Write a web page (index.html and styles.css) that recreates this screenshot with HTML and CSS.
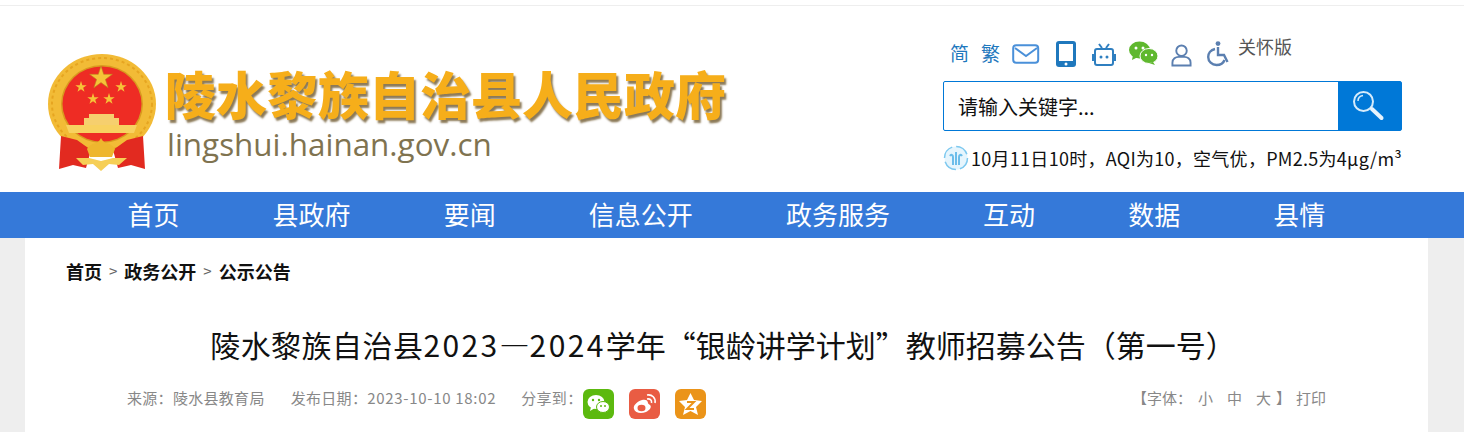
FILE: index.html
```html
<!DOCTYPE html>
<html lang="zh-CN">
<head>
    <meta charset="UTF-8">
    <title>陵水黎族自治县人民政府</title>
    <link rel="stylesheet" href="styles.css">
</head>
<body>
    <div class="top-line"></div>

    <div class="header">
        <div class="logo">
            <svg class="emblem" width="112" height="120" viewBox="0 0 112 120">
                <defs>
                    <polygon id="star" points="0,-6 1.35,-1.85 5.7,-1.85 2.2,.7 3.5,4.85 0,2.3 -3.5,4.85 -2.2,.7 -5.7,-1.85 -1.35,-1.85"/>
                </defs>
                <ellipse cx="55" cy="51" rx="54" ry="50" fill="#f2bb36"/>
                <ellipse cx="55" cy="51" rx="50" ry="46" fill="none" stroke="#e6a521" stroke-width="2" stroke-dasharray="3 3"/>
                <ellipse cx="55" cy="51" rx="41" ry="39" fill="#d99a1f"/>
                <ellipse cx="55" cy="51" rx="39.500" ry="37.500" fill="#ee2c24"/>
                <polygon points="54,13 56.700,21.300 65.400,21.300 58.400,26.400 61.100,34.700 54,29.600 46.900,34.700 49.600,26.400 42.600,21.300 51.300,21.300" fill="#f6c338" stroke="#b8861c" stroke-width=".6"/>
                <use href="#star" transform="translate(34,34)" fill="#f6c338"/>
                <use href="#star" transform="translate(74,34)" fill="#f6c338"/>
                <use href="#star" transform="translate(46,46)" fill="#f6c338"/>
                <use href="#star" transform="translate(62,46)" fill="#f6c338"/>
                <path d="M42 61H67V65H72V72H37V65H42Z" fill="#f6cf6e"/>
                <path d="M19 72H90L87 80H22Z" fill="#f8d160"/>
                <path d="M14 83 30 87 44 97 39 115 26 112 12 116Z" fill="#e22a20"/>
                <path d="M96 83 80 87 66 97 71 115 84 112 98 116Z" fill="#e22a20"/>
                <path d="M40 96C45 88 50 93 54 85 58 93 63 88 68 96L65 104H43Z" fill="#eeb62e"/>
                <path d="M29 105 42 105 54 108 66 105 80 105 72 112 62 111 54 118 46 111 36 112Z" fill="#f6cf56"/>
            </svg>
            <div class="logo-text">
                <div class="logo-title">陵水黎族自治县人民政府</div>
                <div class="logo-url">lingshui.hainan.gov.cn</div>
            </div>
        </div>

        <div class="header-right">
            <div class="tools">
                <a class="tool-text">简</a>
                <a class="tool-text">繁</a>
                <svg class="mail" width="28" height="20" viewBox="0 0 28 20">
                    <rect x="1.200" y="1.200" width="25" height="17.500" rx="3" fill="none" stroke="#4a90d9" stroke-width="2"/>
                    <path d="M3 4 14 12 25 4" fill="none" stroke="#4a90d9" stroke-width="2"/>
                </svg>
                <svg class="phone" width="20" height="26" viewBox="0 0 20 26">
                    <rect width="20" height="26" rx="3" fill="#1f78bd"/>
                    <rect x="3" y="3" width="14" height="17" fill="#fff"/>
                    <circle cx="10" cy="23" r="1.500" fill="#fff"/>
                </svg>
                <svg class="tv" width="24" height="24" viewBox="0 0 24 24">
                    <path d="M7 1 10 5M17 1 14 5" stroke="#2f7fc0" stroke-width="2"/>
                    <rect x="3" y="6" width="18" height="16" rx="2" fill="none" stroke="#2f7fc0" stroke-width="2"/>
                    <rect y="11" width="2" height="7" fill="#2f7fc0"/>
                    <rect x="22" y="11" width="2" height="7" fill="#2f7fc0"/>
                    <circle cx="9" cy="14" r="1.500" fill="#2f7fc0"/>
                    <circle cx="15" cy="14" r="1.500" fill="#2f7fc0"/>
                </svg>
                <svg class="wechat" width="29" height="24" viewBox="0 0 29 24">
                    <ellipse cx="10.500" cy="9" rx="10.500" ry="8.500" fill="#5fb82e"/>
                    <path d="M4 14 3 19 9 16Z" fill="#5fb82e"/>
                    <ellipse cx="20" cy="15" rx="9" ry="7.500" fill="#5fb82e" stroke="#fff"/>
                    <path d="M24 21 26 24 20 22Z" fill="#5fb82e"/>
                    <circle cx="7" cy="7" r="1.500" fill="#fff"/>
                    <circle cx="14" cy="7" r="1.500" fill="#fff"/>
                    <circle cx="17" cy="14" r="1.200" fill="#fff"/>
                    <circle cx="23" cy="14" r="1.200" fill="#fff"/>
                </svg>
                <svg class="user" width="21" height="24" viewBox="0 0 22 24">
                    <circle cx="11" cy="7.500" r="5.500" fill="none" stroke="#5b7fb0" stroke-width="2"/>
                    <path d="M1.500 23V20C1.500 16 5 14 8 14H14C17 14 20.500 16 20.500 20V23Z" fill="none" stroke="#5b7fb0" stroke-width="2"/>
                </svg>
                <svg class="care" width="23" height="26" viewBox="0 0 23 26">
                    <circle cx="11" cy="2.600" r="2.400" fill="#5b7fb0"/>
                    <path d="M11 6V14H17L20.500 21" fill="none" stroke="#5b7fb0" stroke-width="2.400"/>
                    <path d="M8 8C3.500 9 1.200 12.500 1.200 16 1.200 20.500 5 24 9.500 24 13.500 24 16.500 22 17.500 19" fill="none" stroke="#5b7fb0" stroke-width="2.400"/>
                </svg>
                <a class="tool-care">关怀版</a>
            </div>

            <div class="search">
                <div class="search-input">请输入关键字...</div>
                <div class="search-btn">
                    <svg width="34" height="34" viewBox="0 0 34 34">
                        <circle cx="10.500" cy="12.500" r="9.500" fill="none" stroke="#d5ebfb" stroke-width="2"/>
                        <path d="M5 12C5 9 7 7 10 6.500" fill="none" stroke="#d5ebfb" stroke-width="1.500"/>
                        <path d="M19 20 28.500 29" stroke="#e6f3fd" stroke-width="4" stroke-linecap="round"/>
                    </svg>
                </div>
            </div>

            <div class="weather">
                <svg width="26" height="26" viewBox="0 0 26 26">
                    <circle cx="13" cy="13" r="11.500" fill="#e6f5fd" stroke="#7cc8ef" stroke-width="1.500" stroke-dasharray="14 4"/>
                    <path d="M10 20V12C10 10 8 9 7 11M13 20V7M16 20V12C16 10 18 9 19 11" fill="none" stroke="#6cbdea" stroke-width="2"/>
                </svg>
                <span>10月11日10时，AQI为10，空气优，PM2.5为4μg/m³</span>
            </div>
        </div>
    </div>

    <div class="nav">
        <a>首页</a>
        <a>县政府</a>
        <a>要闻</a>
        <a>信息公开</a>
        <a>政务服务</a>
        <a>互动</a>
        <a>数据</a>
        <a>县情</a>
    </div>

    <div class="main">
        <div class="crumbs">
            <a>首页</a><span>&gt;</span><a>政务公开</a><span>&gt;</span><a>公示公告</a>
        </div>

        <h1><span class="place">陵水黎族自治县</span><span class="num">2023</span>—<span class="num">2024</span>学年“银龄讲学计划”教师招募公告（第一号）</h1>

        <div class="meta">
            <div class="meta-left">
                <span class="source">来源：陵水县教育局</span>
                <span class="date">发布日期：<span class="date-num">2023-10-10 18:02</span></span>
                <span class="share">分享到：</span>
                <svg class="share-icon" width="31" height="30" viewBox="0 0 31 30">
                    <rect width="31" height="30" rx="6" fill="#5cb90f"/>
                    <ellipse cx="13" cy="13" rx="8.500" ry="7" fill="#fff"/>
                    <path d="M8 18 7 22 12 19Z" fill="#fff"/>
                    <ellipse cx="20" cy="18" rx="6.500" ry="5.500" fill="#fff" stroke="#5cb90f"/>
                    <circle cx="10" cy="11" r="1.200" fill="#5cb90f"/>
                    <circle cx="16" cy="11" r="1.200" fill="#5cb90f"/>
                    <circle cx="18" cy="17" r="1" fill="#5cb90f"/>
                    <circle cx="22" cy="17" r="1" fill="#5cb90f"/>
                </svg>
                <svg class="share-icon" width="31" height="30" viewBox="0 0 31 30">
                    <rect width="31" height="30" rx="6" fill="#e95c43"/>
                    <path d="M13 11C7 13 4 17 5 20 6 24 12 25 17 23 21 21 23 18 21 16 20 15 19 15 19 14 19 11 16 10 13 11Z" fill="#fff"/>
                    <ellipse cx="12.500" cy="19" rx="4" ry="3.200" fill="#e95c43"/>
                    <path d="M18 6C23 5 27 9 26 14M18 10C21 9.500 23 11 22.500 14" fill="none" stroke="#fff" stroke-width="1.600"/>
                </svg>
                <svg class="share-icon" width="31" height="30" viewBox="0 0 31 30">
                    <rect width="31" height="30" rx="6" fill="#eb9419"/>
                    <polygon points="15.500,4 19,11 27,12 21,18 23,26 15.500,22 8,26 10,18 4,12 12,11" fill="#fff"/>
                    <path d="M12 13H19L12 20H19" fill="none" stroke="#eb9419" stroke-width="2"/>
                </svg>
            </div>
            <div class="meta-right">
                <span class="font-label">【字体：</span>
                <a>小</a>
                <a>中</a>
                <a class="last">大</a>
                <span class="font-end">】</span>
                <span>打印</span>
            </div>
        </div>
    </div>
</body>
</html>
```

FILE: styles.css
```css
* {
    box-sizing: border-box;
    margin: 0;
    padding: 0;
}

body {
    font-family: "Noto Sans CJK SC", "Liberation Sans", sans-serif;
    background-color: #fff;
    height: 432px;
    overflow: hidden;
}

.top-line {
    height: 6px;
    border-bottom: 1px solid #eee;
}

.header {
    height: 186px;
    display: flex;
    justify-content: space-between;
    padding: 0 62px 0 47px;
}

.logo {
    display: flex;
    align-items: flex-start;
    padding-top: 47px;
}

.logo-text {
    margin-left: 6px;
    padding-top: 12px;
}

.logo-title {
    font-size: 51px;
    line-height: 56px;
    font-weight: 900;
    color: #f6ae1a;
    text-shadow: 2px 3px 2px #8c7a58;
}

.logo-url {
    font-family: "Open Sans", sans-serif;
    font-size: 31.4px;
    line-height: 34px;
    margin: 6px 0 0 2px;
    color: #7f7350;
}

.header-right {
    width: 459px;
    padding-top: 28px;
}

.tools {
    display: flex;
    align-items: flex-start;
    height: 47px;
    padding-left: 7px;
}

.tool-text {
    font-size: 19px;
    line-height: 26px;
    color: #1f78bd;
    margin-top: 6px;
    margin-right: 12px;
}

.tools svg {
    flex-shrink: 0;
}

.mail { margin: 10px 16px 0 0; }
.phone { margin: 7px 16px 0 0; }
.tv { margin: 9px 13px 0 0; }
.wechat { margin: 7px 13px 0 0; }
.user { margin: 9px 15px 0 0; }
.care { margin: 7px 8px 0 0; }

.tool-care {
    font-size: 18px;
    line-height: 26px;
    margin-top: -1px;
    color: #555;
}

.search {
    display: flex;
    height: 50px;
    border: 1px solid #0078d7;
    border-radius: 2px;
}

.search-input {
    flex: 1;
    font-size: 20px;
    line-height: 50px;
    padding-left: 14px;
    color: #111;
}

.search-btn {
    width: 63px;
    display: flex;
    align-items: center;
    justify-content: center;
    background-color: #0078d7;
}

.weather {
    display: flex;
    align-items: center;
    margin-top: 14px;
    font-size: 18px;
    line-height: 26px;
    letter-spacing: 0.28px;
    color: #111;
    white-space: nowrap;
}

.weather svg {
    margin-right: 2px;
    flex-shrink: 0;
}

.nav {
    height: 46px;
    display: flex;
    gap: 93.1px;
    padding-left: 127.5px;
    background-color: #3579d9;
}

.nav a {
    font-size: 26px;
    line-height: 44px;
    color: #fff;
}

.main {
    height: 194px;
    background-color: #fff;
    border-left: 25px solid #eee;
    border-right: 36px solid #eee;
}

.crumbs {
    display: flex;
    align-items: center;
    padding: 20px 0 0 41px;
    font-size: 18px;
    line-height: 26px;
    font-weight: 700;
    color: #111;
}

.crumbs span {
    font-weight: 400;
    font-size: 15px;
    color: #666;
    margin: 0 7px;
}

h1 {
    font-size: 30px;
    font-weight: 400;
    line-height: 44px;
    text-align: center;
    color: #111;
    margin-top: 38px;
    padding-right: 7px;
}

h1 .place {
    letter-spacing: 0.45px;
}

h1 .num {
    letter-spacing: 2.4px;
}

.meta {
    display: flex;
    justify-content: space-between;
    align-items: flex-start;
    margin-top: 22px;
    padding: 0 102px;
    font-size: 15px;
    line-height: 20px;
    color: #888;
}

.meta-left {
    display: flex;
    align-items: flex-start;
    letter-spacing: 0.3px;
}

.source {
    margin-right: 26px;
}

.date {
    margin-right: 25px;
}

.date-num {
    letter-spacing: 0.7px;
}

.share-icon {
    margin: 1px 0 0 15px;
}

.share + .share-icon {
    margin-left: 1px;
}

.meta-right {
    display: flex;
}

.font-label {
    margin-right: 6px;
}

.meta-right a {
    margin-right: 14px;
}

.meta-right a.last {
    margin-right: 5px;
}

.font-end {
    margin-right: 5px;
}
```
